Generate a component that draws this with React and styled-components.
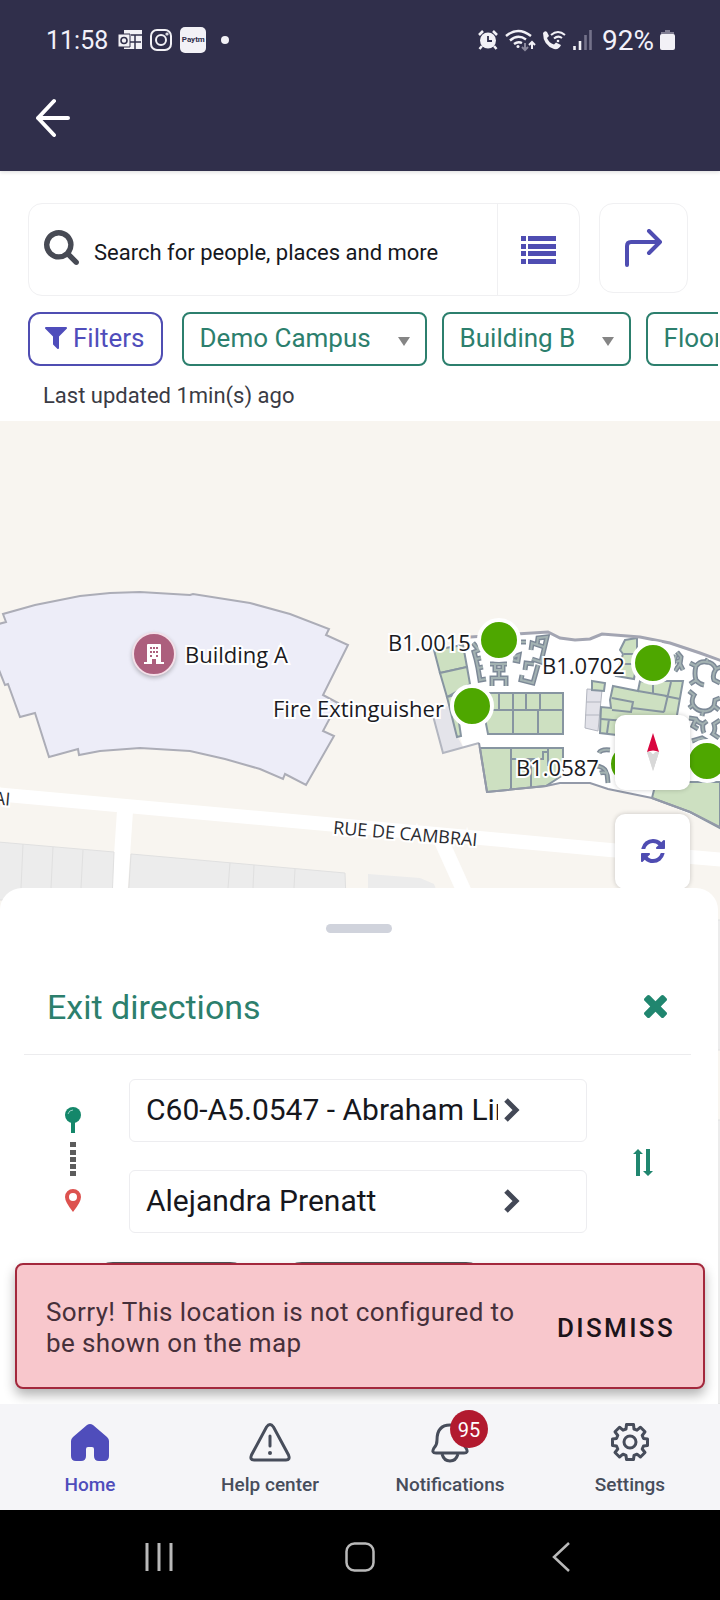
import React, { useState } from "react";
import styled, { createGlobalStyle } from "styled-components";

const GlobalStyle = createGlobalStyle`
  *, *::before, *::after {
    box-sizing: border-box;
  }

  body {
    margin: 0;
    font-family: Roboto, "Liberation Sans", sans-serif;
    color: #16171d;
    background: #fff;
  }

  button, input, select {
    font-family: inherit;
    color: inherit;
    margin: 0;
  }

  button {
    border: none;
    background: none;
    padding: 0;
    cursor: pointer;
  }

  svg {
    display: block;
    flex-shrink: 0;
  }
`;

const Page = styled.div`
  min-height: 100vh;
  display: flex;
  flex-direction: column;
`;

/* ---------- header ---------- */

const Header = styled.header`
  height: 171px;
  background: #302f4b;
  color: #f2f1fa;
  box-shadow: 0 1px 4px rgba(0, 0, 0, 0.15);
  z-index: 2;
`;

const StatusBar = styled.div`
  height: 80px;
  padding: 0 45px 0 46px;
  display: flex;
  align-items: center;
  justify-content: space-between;
`;

const StatusGroup = styled.div`
  display: flex;
  align-items: center;
  gap: ${(props) => props.$gap};
`;

const Clock = styled.span`
  margin-right: 2px;
  font-size: 25px;
`;

const Battery = styled.span`
  margin-left: 4px;
  font-size: 28px;
`;

const PaytmBadge = styled.span`
  width: 26px;
  height: 26px;
  border-radius: 5px;
  background: #f2f1f6;
  color: #302f4b;
  font-size: 8px;
  font-weight: 700;
  line-height: 26px;
  text-align: center;
`;

const MoreDot = styled.span`
  width: 8px;
  height: 8px;
  margin-left: 7px;
  border-radius: 50%;
  background: #f2f1f6;
`;

const BackButton = styled.button`
  display: block;
  margin: 14px 0 0 32px;
  padding: 4px;
`;

/* ---------- search + filters ---------- */

const Toolbar = styled.section`
  padding: 32px 0 0 28px;
  height: 250px;
  background: #fff;
`;

const SearchRow = styled.div`
  display: flex;
  align-items: flex-start;
  gap: 19px;
  padding-right: 32px;
`;

const SearchBox = styled.div`
  flex: 1;
  min-width: 0;
  height: 93px;
  display: flex;
  border: 1px solid #f0f0f2;
  border-radius: 14px;
`;

const SearchField = styled.label`
  flex: 1;
  min-width: 0;
  padding-left: 15px;
  display: flex;
  align-items: center;

  svg {
    margin-bottom: 4px;
  }
`;

const SearchInput = styled.input`
  flex: 1;
  min-width: 0;
  margin: 6px 0 0 15px;
  padding: 0;
  border: none;
  outline: none;
  background: none;
  font-size: 22px;

  &::placeholder {
    color: #16171d;
    opacity: 1;
  }
`;

const ListButton = styled.button`
  width: 82px;
  display: flex;
  align-items: center;
  justify-content: center;
  border-left: 1px solid #f0f0f2;
`;

const RouteButton = styled.button`
  width: 89px;
  height: 90px;
  display: flex;
  align-items: center;
  justify-content: center;
  border: 1px solid #f0f0f2;
  border-radius: 14px;
`;

const FilterRow = styled.div`
  display: flex;
  gap: 15px;
  margin: 16px 2px 0 0;
  overflow: hidden;
`;

const FilterButton = styled.button`
  height: 54px;
  flex-shrink: 0;
  margin-right: 4px;
  padding: 0 16px 2px 15px;
  display: flex;
  align-items: center;
  gap: 6px;
  border: 2px solid #4f4db2;
  border-radius: 12px;
  color: #4f4dbb;
  font-size: 26px;
`;

const SelectBox = styled.label`
  height: 54px;
  flex-shrink: 0;
  display: flex;
  align-items: center;
  padding: 0 15px 2px 16px;
  border: 2px solid #2c7f6d;
  border-radius: 8px;

  &::after {
    content: "";
    margin-top: 6px;
    border: 6px solid transparent;
    border-top: 9px solid #858585;
    border-bottom: none;
    pointer-events: none;
  }
`;

const Select = styled.select`
  appearance: none;
  border: none;
  outline: none;
  background: none;
  padding: 0 26px 0 0;
  color: #2c7f6d;
  font-size: 26px;
`;

const Updated = styled.p`
  margin: 16px 0 0 15px;
  font-size: 22px;
  line-height: 28px;
  color: #3a3b44;
`;

/* ---------- map ---------- */

const MapArea = styled.main`
  flex: 1;
  min-height: 983px;
  position: relative;
  display: flex;
  flex-direction: column;
  justify-content: flex-end;
  overflow: hidden;
  background: #f8f5f0;
`;

const MapDrawing = styled.svg`
  position: absolute;
  top: 0;
  left: 0;
`;

const MapLabel = styled.span`
  position: absolute;
  left: ${(props) => props.$x}px;
  top: ${(props) => props.$y}px;
  transform: translateY(-50%);
  font-family: "Open Sans", "Noto Sans", sans-serif;
  font-size: 22px;
  white-space: nowrap;
  color: #1b1b1f;
  -webkit-text-stroke: 4px #fff;
  paint-order: stroke fill;
`;

const StreetLabel = styled(MapLabel)`
  font-size: 18px;
  color: #2b2c31;
  transform: translateY(-50%) rotate(5deg);
`;

const Pin = styled.button`
  position: absolute;
  left: ${(props) => props.$x}px;
  top: ${(props) => props.$y}px;
  width: 44px;
  height: 44px;
  transform: translate(-50%, -50%);
  border: 4px solid #fff;
  border-radius: 50%;
  background: #4ea700;
`;

const BuildingPin = styled(Pin)`
  display: flex;
  align-items: center;
  justify-content: center;
  border: 2px solid #f3dfe8;
  background: #ac5f7d;
  box-shadow: 0 2px 4px rgba(0, 0, 0, 0.25);
`;

const MapControls = styled.div`
  position: absolute;
  top: 294px;
  right: 30px;
  display: grid;
  gap: 24px;
`;

const MapButton = styled.button`
  width: 75px;
  height: 75px;
  padding-bottom: 2px;
  display: flex;
  align-items: center;
  justify-content: center;
  border-radius: 10px;
  background: #fff;
  box-shadow: 0 0 5px rgba(0, 0, 0, 0.2);
`;

/* ---------- directions sheet ---------- */

const Sheet = styled.section`
  position: relative;
  height: 516px;
  margin-right: 2px;
  padding-top: 36px;
  border-radius: 22px 22px 0 0;
  background: #fff;
  overflow: hidden;
`;

const Handle = styled.div`
  width: 66px;
  height: 9px;
  margin: 0 auto;
  border-radius: 5px;
  background: #d0d3dc;
`;

const SheetHeader = styled.div`
  height: 122px;
  margin: 0 27px 0 24px;
  padding: 26px 24px 0 23px;
  display: flex;
  align-items: center;
  justify-content: space-between;
  border-bottom: 1px solid #ececee;
`;

const SheetTitle = styled.h1`
  margin: 0;
  font-size: 34px;
  font-weight: 400;
  color: #2c7f6d;
`;

const Route = styled.div`
  display: grid;
  grid-template-columns: 129px 1fr 131px;
  align-items: center;
  margin-top: 24px;
`;

const RouteMarks = styled.div`
  display: flex;
  justify-content: center;
  padding: 8px 0 0 17px;
`;

const Stops = styled.div`
  display: grid;
  gap: 28px;
`;

const Stop = styled.button`
  height: 63px;
  padding: 0 0 2px 16px;
  display: grid;
  grid-template-columns: 1fr 88px;
  align-items: center;
  border: 1px solid #ededf0;
  border-radius: 6px;
  text-align: left;
  font-size: 30px;

  svg {
    margin-left: 5px;
  }
`;

const StopName = styled.span`
  overflow: hidden;
  white-space: nowrap;
`;

const SwapButton = styled.button`
  justify-self: center;
  padding: 12px 20px 0 0;
`;

const ChipRow = styled.div`
  display: flex;
  gap: 16px;
  margin: 29px 0 0 85px;
`;

const Chip = styled.div`
  width: ${(props) => props.$width};
  height: 56px;
  border-radius: 28px;
  background: #4d5457;
`;

const Snackbar = styled.div`
  position: absolute;
  left: 15px;
  right: 15px;
  bottom: 15px;
  min-height: 126px;
  padding: 4px 28px 0 29px;
  display: flex;
  align-items: center;
  justify-content: space-between;
  border: 2px solid #a3283c;
  border-radius: 8px;
  background: #f8c7cc;
  box-shadow: 0 6px 12px rgba(0, 0, 0, 0.3);
`;

const SnackText = styled.p`
  max-width: 490px;
  margin: 0;
  font-size: 26px;
  line-height: 31px;
  letter-spacing: 0.015em;
  color: #46303a;
`;

const DismissButton = styled.button`
  font-size: 26px;
  font-weight: 500;
  letter-spacing: 0.09em;
  color: #1c1419;
`;

/* ---------- tabs + system keys ---------- */

const Tabs = styled.nav`
  height: 106px;
  display: grid;
  grid-template-columns: repeat(4, 1fr);
  background: #f5f5f8;
  z-index: 1;
`;

const Tab = styled.a`
  display: flex;
  flex-direction: column;
  align-items: center;
  padding-top: 19px;
  gap: 10px;
  color: ${(props) => (props.$active ? "#4f4dbb" : "#474d5b")};
  font-size: 19px;
  font-weight: 500;
  line-height: 24px;
  text-decoration: none;
`;

const TabIcon = styled.span`
  position: relative;
  height: 40px;
`;

const Badge = styled.span`
  position: absolute;
  top: -13px;
  left: 19px;
  width: 38px;
  height: 38px;
  border-radius: 50%;
  background: #b21a2f;
  color: #fff;
  font-size: 20px;
  font-weight: 400;
  line-height: 40px;
  text-align: center;
`;

const SystemKeys = styled.div`
  height: 90px;
  padding: 4px 58px 0;
  display: grid;
  grid-template-columns: repeat(3, 1fr);
  align-items: center;
  justify-items: center;
  background: #000;
  color: #b9b9b9;
`;

const rooms = [
  "434,650 463,645 467,667 440,673",
  "440,673 467,667 470,684 447,697",
  "447,697 455,695 461,736 457,737",
  "480,693 563,693 563,734 488,734",
  "480,748 563,748 563,775 546,786 487,792",
  "625,640 637,638 637,662 634,679 616,676 623,654 620,650",
  "592,681 605,683 604,691 592,690",
  "613,686 638,691 640,681 652,683 652,681 683,681 677,715 660,740 600,733 601,707 611,708 610,700",
  "652,798 656,782 720,782 720,828 690,812",
];

const walls = [
  "M482 710H563M499 693V710M513 693V734M526 693V710M540 693V710M538 710V734",
  "M511 748V789M511 759H543V752H548V748M531 759V787M548 748V766",
  "M612 698L633 702L631 712L612 710M632 708L664 712M664 712L671 682M665 696L680 699M653 681V693M638 691L667 696M601 719L625 721M609 719L607 733",
  "M624 654H637M621 664H636",
];

const desks = [
  "M473 643L479 650L474 652L476 659L481 658M476 659L478 668L483 667M478 668L480 680L486 679",
  "M490 664H507M495 664V670H503V664M499 670V678M492 686V678H506V686",
  "M513 660L518 661L519 655L513 657M521 642H526",
  "M531 650L532 643L544 647M537 645L538 638L547 637L541 662L532 659M534 664L526 663L525 670M522 675L521 680L533 683L538 665",
  "M677 652L681 657L680 664L683 670M681 660L676 662M676 655L673 664M680 664L675 671",
  "M690 663L696 666Q694 674 696 680L690 684M696 666Q700 661 706 662L708 659M706 662Q713 662 716 669L721 667M716 669Q712 675 714 680L720 683M696 680Q699 684 704 685",
  "M689 691L694 695Q691 700 693 705L689 708M693 705Q697 711 703 711L702 716M703 711Q710 712 714 706L719 710M714 706L715 700L720 698",
  "M689 718L696 719Q698 723 703 724L707 721M703 724Q702 729 704 733M696 719L693 726L698 729M720 720L714 724Q716 730 713 734L719 738",
  "M692 741L702 738L707 741",
  "M599 753Q601 749 610 750M595 766Q604 766 607 773L608 783M600 773Q603 772 607 773",
];

const CampusMap = () => (
  <MapDrawing width="720" height="983" viewBox="0 421 720 983" aria-hidden="true">
    {/* streets */}
    <g fill="none" stroke="#fff">
      <path d="M-5 794L370 828L610 850L725 860" strokeWidth="14" />
      <path d="M125 811L119 900" strokeWidth="16" />
      <path d="M440 838L468 900" strokeWidth="15" />
    </g>

    {/* neighbouring blocks */}
    <g fill="#ececec" stroke="#e0e0e0">
      <path d="M-2 842L114 852L112 900H-2Z" />
      <path d="M131 854L345 873L346 900H128Z" />
      <path d="M368 874L420 878L434 884L440 900H368Z" stroke="none" />
      <path d="M716 920H722V1050H716ZM716 1120H722V1404H716Z" />
      <path d="M23 844L21 888M53 847L51 888M83 850L81 888M230 863L228 888M254 865L253 888M295 869L294 888" fill="none" />
    </g>

    {/* Building A */}
    <path
      d="M-5 625L6 622L3 614L35 605L80 596L110 593L140 592L190 595L193 594L250 603L290 614L329 629L326 635L348 645L323 695L338 703L323 731L334 736L306 785L285 774L283 779L260 769L225 759L190 751L140 748L100 751L79 755L78 749L49 757L35 713L20 717L8 684L5 685L-5 660Z"
      fill="#ededf8"
      stroke="#acadb7"
      strokeWidth="2"
    />

    {/* Building B */}
    <path
      d="M433 650L480 635L548 632L560 638L575 640L590 639L602 634L640 637L670 643L700 653L722 661V828L680 810L652 798L608 788L590 783L572 783L546 786L487 792L479 743L463 747Z"
      fill="#fff"
    />
    <path d="M432 712L448 706L457 736L463 747L443 753Z" fill="#e4e4ea" />
    <path d="M432 712L443 753L479 743" fill="none" stroke="#b3b6c0" strokeWidth="2" />
    <path d="M587 689L602 690L598 731L585 728Z" fill="#e2e2e9" stroke="#b3b6c0" />
    <path d="M586 702H601M585 715H599" stroke="#b3b6c0" />
    <g fill="#cde0c1" stroke="#8795a1" strokeWidth="2">
      {rooms.map((points) => (
        <polygon key={points} points={points} />
      ))}
    </g>
    <g fill="none" stroke="#8795a1" strokeWidth="2">
      {walls.map((d) => (
        <path key={d} d={d} />
      ))}
    </g>
    <g fill="none" stroke="#7d8997" strokeWidth="5">
      {desks.map((d) => (
        <path key={d} d={d} />
      ))}
    </g>
    <g fill="none" stroke="#a3b2b2" strokeWidth="2">
      {desks.map((d) => (
        <path key={d} d={d} />
      ))}
    </g>
    <path
      d="M470 637L548 632L560 638L575 640L590 639L602 634L640 637L670 643L700 653L722 661"
      fill="none"
      stroke="#a3a5b2"
      strokeWidth="3"
    />
    <path
      d="M479 743L487 792L546 786L560 783L590 783L608 789L652 798L690 812L722 828"
      fill="none"
      stroke="#9399a8"
      strokeWidth="2"
    />
  </MapDrawing>
);

const Chevron = () => (
  <svg width="18" height="24" viewBox="0 0 18 24" fill="none" stroke="#434856" strokeWidth="5">
    <path d="M3 2L13 12L3 22" />
  </svg>
);

const StatusIcons = () => (
  <StatusGroup $gap="8px">
    <Clock>11:58</Clock>
    <svg width="24" height="20" viewBox="0 0 24 20">
      <path d="M6 0H24V19H6Z" fill="#f2f1f6" />
      <path d="M13 5H24M17 5V19M12 12H23" stroke="#302f4b" strokeWidth="1.5" />
      <path d="M0 4H12V17H0Z" fill="#f2f1f6" stroke="#302f4b" />
      <circle cx="6" cy="10.5" r="3" fill="none" stroke="#302f4b" strokeWidth="1.6" />
    </svg>
    <svg width="22" height="22" viewBox="0 0 22 22" fill="none" stroke="#f2f1f6" strokeWidth="2">
      <rect x="1" y="1" width="20" height="20" rx="6" />
      <circle cx="11" cy="11" r="5" />
      <circle cx="17" cy="5" r="0.6" />
    </svg>
    <PaytmBadge>Paytm</PaytmBadge>
    <MoreDot />
  </StatusGroup>
);

const SignalIcons = () => (
  <StatusGroup $gap="6px">
    <svg width="20" height="20" viewBox="0 0 20 20" fill="#f2f1f6">
      <circle cx="10" cy="10.5" r="8" />
      <path d="M1 5L5 1M19 5L15 1M4 16L1.5 19M16 16L18.5 19" stroke="#f2f1f6" strokeWidth="2.5" />
      <path d="M10 6V11H14" fill="none" stroke="#302f4b" strokeWidth="1.8" />
    </svg>
    <svg width="32" height="23" viewBox="0 0 32 23" fill="none" stroke="#f2f1f6" strokeWidth="2.4">
      <path d="M2 7Q14 -3 27 7M6 11.5Q14 4.5 22 10.5M10 15Q14 12 18 14" />
      <circle cx="14" cy="17.5" r="1.5" fill="#f2f1f6" stroke="none" />
      <path d="M21 14V21M18 18L21 21L24 18" stroke="#8a889c" strokeWidth="2" />
      <path d="M28 20V13M25 16L28 13L31 16" strokeWidth="2" />
    </svg>
    <svg width="24" height="20" viewBox="0 0 24 20" fill="none" stroke="#f2f1f6">
      <path
        d="M1 3Q3 0 5 2L7 6L5 8Q7 13 12 14.5L14 12.5L19 15Q17 20 12 19Q1 15 1 3Z"
        fill="#f2f1f6"
        stroke="none"
      />
      <path d="M9 5Q16 -1 23 5M12 8.5Q16 5 20 8" strokeWidth="2" />
      <circle cx="16" cy="11" r="1.3" fill="#f2f1f6" stroke="none" />
    </svg>
    <svg width="20" height="20" viewBox="0 0 20 20">
      <path d="M2.5 16V20M8 11V20" stroke="#f2f1f6" strokeWidth="2.6" />
      <path d="M13.5 5V20M18.5 0V20" stroke="#74728a" strokeWidth="2.6" />
    </svg>
    <Battery>92%</Battery>
    <svg width="15" height="22" viewBox="0 0 15 22">
      <path d="M5 1H10V3H14V6H1V3H5Z" fill="#817f93" />
      <rect y="5" width="15" height="16" rx="2" fill="#f2f1f6" />
    </svg>
  </StatusGroup>
);

const HomeIcon = () => (
  <svg width="38" height="40" viewBox="0 0 38 40">
    <path
      d="M16 2Q19 0 22 2L36 14Q38 16 38 18V33Q38 38 33 38H28Q23 38 23 33V26Q23 24 21 24H17Q15 24 15 26V33Q15 38 10 38H5Q0 38 0 33V18Q0 16 2 14Z"
      fill="#4f4dbb"
    />
  </svg>
);

const HelpIcon = () => (
  <svg width="42" height="40" viewBox="0 0 42 40" fill="none" stroke="#474d5b" strokeWidth="3" strokeLinecap="round">
    <path d="M17.5 4Q21 -1 24.5 4L39.5 32Q41.5 37 37 37H5Q0.5 37 2.5 32Z" />
    <path d="M21 13V23" />
    <circle cx="21" cy="30" r="2" fill="#474d5b" stroke="none" />
  </svg>
);

const BellIcon = () => (
  <svg width="38" height="40" viewBox="0 0 38 40" fill="none" stroke="#474d5b" strokeWidth="3">
    <path d="M19 2Q6 2 6 17Q6 22 3 25Q0 30 5 30H33Q38 30 35 25Q32 22 32 17Q32 2 19 2Z" />
    <path d="M11 31Q13 38 19 38Q25 38 27 31" />
  </svg>
);

const GearIcon = () => (
  <svg width="38" height="40" viewBox="0 1 38 40" fill="none" stroke="#474d5b" strokeWidth="3" strokeLinejoin="round">
    <path d="M15.5 2.5H22.5L23 7L26 8.2L29.5 5.2L34 9.8L31.2 13.5L32.5 16.5L36.5 17V23.5L32.5 24L31.2 27L34 30.5L29.5 35L26 32.2L23 33.5L22.5 37.5H15.5L15 33.5L12 32.2L8.5 35L4 30.5L6.8 27L5.5 24L1.5 23.5V17L5.5 16.5L6.8 13.5L4 9.8L8.5 5.2L12 8.2L15 7Z" />
    <circle cx="19" cy="20" r="6" />
  </svg>
);

const App = () => {
  const [showSnackbar, setShowSnackbar] = useState(true);
  const [query, setQuery] = useState("");

  return (
    <>
      <GlobalStyle />
      <Page>
        <Header>
          <StatusBar>
            <StatusIcons />
            <SignalIcons />
          </StatusBar>
          <BackButton>
            <svg width="36" height="40" viewBox="0 0 36 40" fill="none" stroke="#fff" strokeWidth="4" strokeLinecap="round" strokeLinejoin="round">
              <path d="M18 3L2 20L18 37M2 20H32" />
            </svg>
          </BackButton>
        </Header>

        <Toolbar>
          <SearchRow>
            <SearchBox>
              <SearchField>
                <svg width="35" height="35" viewBox="0 128 1664 1664" fill="#474a54">
                  <path d="M1152 832q0-185-131.500-316.500t-316.500-131.500-316.500 131.500-131.500 316.500 131.500 316.500 316.500 131.500 316.500-131.500 131.500-316.500zm512 832q0 52-38 90t-90 38q-54 0-90-38l-343-342q-179 124-399 124-143 0-273.500-55.500t-225-150-150-225-55.500-273.500 55.500-273.500 150-225 225-150 273.500-55.500 273.500 55.500 225 150 150 225 55.500 273.500q0 220-124 399l343 343q37 37 37 90z" />
                </svg>
                <SearchInput
                  value={query}
                  onChange={(e) => setQuery(e.target.value)}
                  placeholder="Search for people, places and more"
                />
              </SearchField>
              <ListButton>
                <svg width="35" height="28" viewBox="0 0 35 28" fill="#4f4db2">
                  <path d="M0 0H5V5H0ZM7 0H35V5H7ZM0 8H5V13H0ZM7 8H35V13H7ZM0 15H5V20H0ZM7 15H35V20H7ZM0 23H5V28H0ZM7 23H35V28H7Z" />
                </svg>
              </ListButton>
            </SearchBox>
            <RouteButton>
              <svg width="38" height="38" viewBox="0 0 38 38" fill="none" stroke="#4f4db2" strokeWidth="4" strokeLinecap="round" strokeLinejoin="round">
                <path d="M2 36V17Q2 13 6 13H35M24 2L35 13L24 24" />
              </svg>
            </RouteButton>
          </SearchRow>

          <FilterRow>
            <FilterButton>
              <svg width="22" height="22" viewBox="0 256 1408 1408" fill="currentColor">
                <path d="M1403 295q17 41-14 70l-493 493v742q0 42-39 59-13 5-25 5-27 0-45-19l-256-256q-19-19-19-45v-486l-493-493q-31-29-14-70 17-39 59-39h1280q42 0 59 39z" />
              </svg>
              Filters
            </FilterButton>
            {["Demo Campus", "Building B", "Floor 1"].map((name) => (
              <SelectBox key={name}>
                <Select defaultValue={name}>
                  <option>{name}</option>
                </Select>
              </SelectBox>
            ))}
          </FilterRow>
          <Updated>Last updated 1min(s) ago</Updated>
        </Toolbar>

        <MapArea>
          <CampusMap />
          <MapLabel $x={185} $y={233}>Building A</MapLabel>
          <MapLabel $x={388} $y={221}>B1.0015</MapLabel>
          <MapLabel $x={273} $y={287}>Fire Extinguisher</MapLabel>
          <MapLabel $x={542} $y={244}>B1.0702</MapLabel>
          <MapLabel $x={516} $y={346}>B1.0587</MapLabel>
          <StreetLabel $x={333} $y={412}>RUE DE CAMBRAI</StreetLabel>
          <StreetLabel $x={-6} $y={377}>AI</StreetLabel>
          <Pin $x={499} $y={219} />
          <Pin $x={472} $y={285} />
          <Pin $x={653} $y={242} />
          <Pin $x={629} $y={343} />
          <Pin $x={707} $y={340} />
          <BuildingPin $x={154} $y={233}>
            <svg width="20" height="20" viewBox="0 0 20 20" fill="#fff">
              <path
                fillRule="evenodd"
                d="M4 0H16Q17 0 17 1V18H20V20H0V18H3V1Q3 0 4 0ZM6 3V5H8V3ZM12 3V5H14V3ZM6 7V9H8V7ZM12 7V9H14V7ZM9 3V5H11V3ZM9 7V9H11V7ZM6 11V13H8V11ZM12 11V13H14V11ZM8 15V20H12V15Z"
              />
            </svg>
          </BuildingPin>

          <MapControls>
            <MapButton>
              <svg width="14" height="38" viewBox="0 0 14 38">
                <path d="M7 0L13 19Q7 16 1 19Z" fill="#d9063f" />
                <path d="M1 19Q7 23 7 38Z" fill="#e4e4e4" />
                <path d="M13 19Q7 23 7 38Z" fill="#cfcfcf" />
                <path d="M1 19L5 19Q7 23 9 19L13 19L7 38Z" fill="#d8d8d8" />
              </svg>
            </MapButton>
            <MapButton>
              <svg width="24" height="24" viewBox="0 0 1536 1536" fill="#4f4db2">
                <path d="M1511 928q0 5-1 7-64 268-268 434.500t-478 166.500q-146 0-282.500-55t-243.500-157l-129 129q-19 19-45 19t-45-19-19-45v-448q0-26 19-45t45-19h448q26 0 45 19t19 45-19 45l-137 137q71 66 161 102t187 36q134 0 250-65t186-179q11-17 53-117 8-23 30-23h192q13 0 22.500 9.500t9.500 22.500zm25-800v448q0 26-19 45t-45 19h-448q-26 0-45-19t-19-45 19-45l138-138q-148-137-349-137-134 0-250 65t-186 179q-11 17-53 117-8 23-30 23h-199q-13 0-22.500-9.500t-9.500-22.500v-7q65-268 270-434.500t480-166.500q146 0 284 55.500t245 156.500l130-129q19-19 45-19t45 19 19 45z" />
              </svg>
            </MapButton>
          </MapControls>

          <Sheet>
            <Handle />
            <SheetHeader>
              <SheetTitle>Exit directions</SheetTitle>
              <button>
                <svg width="23" height="23" viewBox="110 366 1188 1188" fill="#20866f">
                  <path d="M1298 1322q0 40-28 68l-136 136q-28 28-68 28t-68-28l-294-294-294 294q-28 28-68 28t-68-28l-136-136q-28-28-28-68t28-68l294-294-294-294q-28-28-28-68t28-68l136-136q28-28 68-28t68 28l294 294 294-294q28-28 68-28t68 28l136 136q28 28 28 68t-28 68l-294 294 294 294q28 28 28 68z" />
                </svg>
              </button>
            </SheetHeader>

            <Route>
              <RouteMarks>
                <svg width="16" height="106" viewBox="0 0 16 106">
                  <path d="M6 14H10V26H6Z" fill="#14876a" />
                  <circle cx="8" cy="8" r="8" fill="#14876a" />
                  <path d="M3 7Q4 3 8 3" fill="none" stroke="#9ad0c2" />
                  <path
                    d="M5 35H11V40H5ZM5 43H11V48H5ZM5 50H11V55H5ZM5 57H11V62H5ZM5 64H11V69H5Z"
                    fill="#5c5c5c"
                  />
                  <path
                    fillRule="evenodd"
                    d="M8 82A8 8 0 0 1 16 90Q16 95 8 105Q0 95 0 90A8 8 0 0 1 8 82ZM8 86A4 4 0 1 0 8 94A4 4 0 1 0 8 86Z"
                    fill="#dd524f"
                  />
                </svg>
              </RouteMarks>
              <Stops>
                <Stop>
                  <StopName>C60-A5.0547 - Abraham Lincoln</StopName>
                  <Chevron />
                </Stop>
                <Stop>
                  <StopName>Alejandra Prenatt</StopName>
                  <Chevron />
                </Stop>
              </Stops>
              <SwapButton>
                <svg width="20" height="27" viewBox="0 0 20 27" fill="#20866f">
                  <path d="M5 0L10 5H7V27H3V5H0ZM13 0H17V22H20L15 27L10 22H13Z" />
                </svg>
              </SwapButton>
            </Route>

            <ChipRow>
              <Chip $width="173px" />
              <Chip $width="220px" />
            </ChipRow>
          </Sheet>

          {showSnackbar && (
            <Snackbar role="alert">
              <SnackText>Sorry! This location is not configured to be shown on the map</SnackText>
              <DismissButton onClick={() => setShowSnackbar(false)}>DISMISS</DismissButton>
            </Snackbar>
          )}
        </MapArea>

        <Tabs>
          <Tab href="#home" $active>
            <TabIcon><HomeIcon /></TabIcon>
            Home
          </Tab>
          <Tab href="#help">
            <TabIcon><HelpIcon /></TabIcon>
            Help center
          </Tab>
          <Tab href="#notifications">
            <TabIcon>
              <BellIcon />
              <Badge>95</Badge>
            </TabIcon>
            Notifications
          </Tab>
          <Tab href="#settings">
            <TabIcon><GearIcon /></TabIcon>
            Settings
          </Tab>
        </Tabs>

        <SystemKeys>
          <button>
            <svg width="32" height="30" viewBox="0 0 32 30" stroke="currentColor" strokeWidth="3">
              <path d="M4 1V29M16 1V29M28 1V29" />
            </svg>
          </button>
          <button>
            <svg width="30" height="30" viewBox="0 0 30 30" fill="none" stroke="currentColor" strokeWidth="2.5">
              <rect x="1.5" y="1.5" width="27" height="27" rx="8" />
            </svg>
          </button>
          <button>
            <svg width="20" height="30" viewBox="0 0 20 30" fill="none" stroke="currentColor" strokeWidth="2.5">
              <path d="M18 1L3 15L18 29" />
            </svg>
          </button>
        </SystemKeys>
      </Page>
    </>
  );
};

export default App;
